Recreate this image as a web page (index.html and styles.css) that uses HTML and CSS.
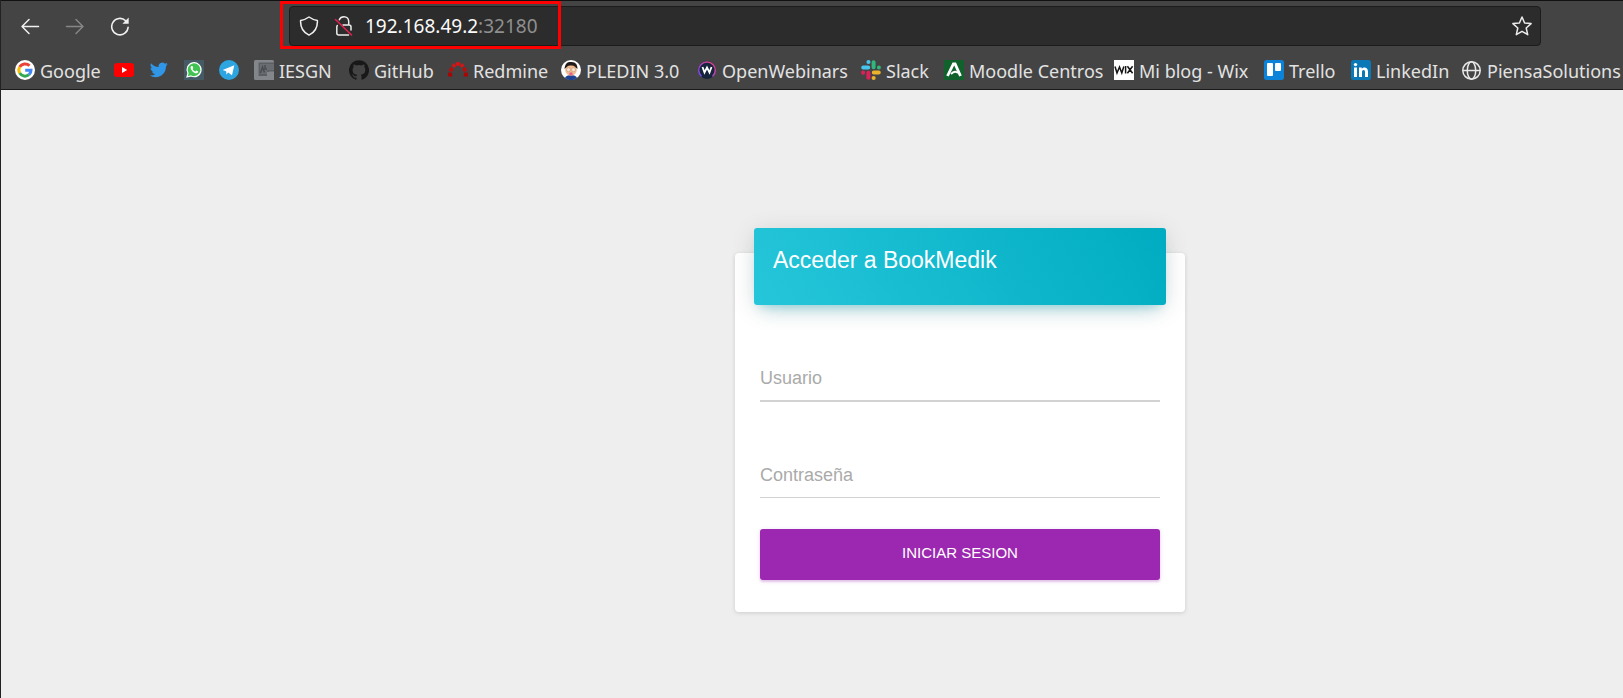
FILE: index.html
```html
<!DOCTYPE html>
<html lang="es">
<head>
<meta charset="utf-8">
<title>BookMedik</title>
<link rel="stylesheet" href="styles.css">
</head>
<body>
<div class="window">
  <header class="chrome">
    <div class="toolbar">
      <div class="nav">
        <button class="nav-button" type="button" aria-label="Atrás"><svg class="icon" viewBox="0 0 20 20"><path d="M18.500 10.500H2M9 3.500l-7 7 7 7" fill="none" stroke="#f0f0f0" stroke-width="1.500" stroke-linecap="round" stroke-linejoin="round"/></svg></button>
        <button class="nav-button" type="button" aria-label="Adelante" disabled><svg class="icon" viewBox="0 0 20 20"><path d="M1.500 10.500H18M11 3.500l7 7-7 7" fill="none" stroke="#868686" stroke-width="1.500" stroke-linecap="round" stroke-linejoin="round"/></svg></button>
        <button class="nav-button" type="button" aria-label="Recargar"><svg class="icon" viewBox="0 0 20 20"><path d="M18.100 11.200A8.200 8.200 0 1 1 15.700 4.800" fill="none" stroke="#f0f0f0" stroke-width="1.600" stroke-linecap="round"/><path d="M18.700 1.500v6.300h-6.300z" fill="#f0f0f0"/></svg></button>
      </div>
      <div class="address">
        <svg class="icon" viewBox="0 0 20 20"><path d="M10 1C7.500 2.800 4.500 4 1.600 4.600 1.300 11 4.500 16.500 10 19.200 15.500 16.500 18.700 11 18.400 4.600 15.500 4 12.500 2.800 10 1z" fill="none" stroke="#f0f0f0" stroke-width="1.500" stroke-linejoin="round"/></svg>
        <svg class="icon icon-lock" viewBox="0 0 20 20"><g fill="none" stroke="#ececec" stroke-width="1.500" stroke-linecap="round"><path d="M5.300 3.800C6 2 7.800.8 10 .8c2.800 0 4.700 2 4.700 4.600V9M9 9h6c1.200 0 2 .8 2 2v3M3.300 9.500c-.3.400-.5.800-.5 1.500v6c0 1.200.8 2 2 2h9.700"/></g><path d="M1.500 3.500l16 15.500" stroke="#e9204f" stroke-width="1.500" stroke-linecap="round"/></svg>
        <span class="url">192.168.49.2<span class="url-port">:32180</span></span>
        <svg class="icon icon-star" viewBox="0 0 20 20"><path d="M10 1l2.600 6 6.500.6-4.900 4.400 1.500 6.700L10 15.300l-5.700 3.400L5.800 12 .9 7.600l6.500-.6z" fill="none" stroke="#ececec" stroke-width="1.500" stroke-linejoin="round"/></svg>
        <span class="highlight"></span>
      </div>
    </div>
    <nav class="bookmarks">
      <a class="bookmark" href="#"><svg class="icon" viewBox="0 0 20 20"><circle cx="10" cy="10" r="10" fill="#fff"/><g fill="none" stroke-width="3"><path d="M14.500 5.800A6.200 6.200 0 0 0 4.700 6.900" stroke="#ea4335"/><path d="M4.700 6.900a6.200 6.200 0 0 0 0 6.200" stroke="#fbbc05"/><path d="M4.700 13.100a6.200 6.200 0 0 0 9.300 1.600" stroke="#34a853"/><path d="M14 14.700A6 6 0 0 0 16 10.200H10.200" stroke="#4285f4"/></g></svg>Google</a>
      <a class="bookmark" href="#" aria-label="YouTube"><svg class="icon" viewBox="0 0 20 20"><rect y="3" width="20" height="14" rx="3" fill="#f00"/><path d="M8 7l5.200 3L8 13z" fill="#fff"/></svg></a>
      <a class="bookmark" href="#" aria-label="Twitter"><svg class="icon" viewBox="0 0 24 24"><path transform="translate(1 1) scale(.9)" d="M23.950 4.570a10 10 0 0 1-2.820.770 4.960 4.960 0 0 0 2.160-2.720c-.95.550-2 .950-3.130 1.180a4.920 4.920 0 0 0-8.380 4.480C7.690 8.100 4.070 6.130 1.640 3.160a4.820 4.820 0 0 0-.67 2.480c0 1.710.87 3.210 2.190 4.100a4.900 4.900 0 0 1-2.230-.62v.06a4.920 4.920 0 0 0 3.950 4.830 5 5 0 0 1-2.210.08 4.940 4.940 0 0 0 4.600 3.420A9.870 9.870 0 0 1 0 19.540a14 14 0 0 0 7.550 2.210c9.050 0 14-7.500 14-13.980 0-.21 0-.42-.02-.63a9.940 9.940 0 0 0 2.460-2.550z" fill="#2f96e8"/></svg></a>
      <a class="bookmark" href="#" aria-label="WhatsApp"><svg class="icon" viewBox="0 0 20 20"><path d="M0 0h20v20H0z" fill="#455a64"/><path d="M3 17l1-3.800A7 7 0 1 1 7 16z" fill="#40c351" stroke="#fff" stroke-width="1.200"/><path d="M7.400 6c-1.300.9-1 2.600.4 4.400 1.600 2.200 4.300 3.700 5.900 2.400.7-.7.500-1.200.2-1.500l-1.500-.7-1 1C10 11.100 9 10 8.600 9l.7-1-.8-2z" fill="#fff"/></svg></a>
      <a class="bookmark" href="#" aria-label="Telegram"><svg class="icon" viewBox="0 0 20 20"><circle cx="10" cy="10" r="10" fill="#2ca5e0"/><path d="M3.700 10L15.300 5.300 13 15.200 9.200 12.600 7.300 14.500 7 11.300z" fill="#fff"/><path d="M7 11.300l1.300 1-1 2.200z" fill="#b5d6e8"/></svg></a>
      <a class="bookmark" href="#"><svg class="icon" viewBox="0 0 20 20"><rect width="20" height="20" rx="1.500" fill="#83868b"/><path d="M20 3.500H5.500V15H14v-4.500h6" fill="none" stroke="#5c5f62" stroke-width="1.800"/><path d="M6.400 4.400H20V9.600H13V14H6.400z" fill="#696c70"/><path d="M6.500 13l2-6 2 5.500M11 5v4h2" fill="none" stroke="#4a4d50" stroke-width="1.500"/><path d="M13 12h7v8h-7z" fill="#83868b"/></svg>IESGN</a>
      <a class="bookmark" href="#"><svg class="icon" viewBox="0 0 24 24"><path d="M12 .3a12 12 0 0 0-3.800 23.400c.6.100.8-.3.800-.6v-2c-3.300.7-4-1.600-4-1.600-.6-1.400-1.400-1.800-1.400-1.800-1-.7.100-.7.100-.7 1.200 0 1.900 1.200 1.900 1.200 1 1.800 2.800 1.300 3.500 1 0-.8.400-1.300.7-1.600-2.700-.3-5.500-1.300-5.500-6 0-1.200.5-2.300 1.300-3.100-.2-.4-.6-1.600 0-3.200 0 0 1-.3 3.400 1.200a11.500 11.500 0 0 1 6 0c2.300-1.500 3.300-1.200 3.300-1.200.6 1.600.2 2.800 0 3.200.9.800 1.300 1.900 1.300 3.200 0 4.600-2.800 5.600-5.500 5.900.5.400.9 1 .9 2.200v3.300c0 .3.100.7.800.6A12 12 0 0 0 12 .3" fill="#181818"/></svg>GitHub</a>
      <a class="bookmark" href="#"><svg class="icon" viewBox="0 0 20 20"><path d="M0 12.500l4 .3.300 3.700H0zM16 12.800l4-.3v4h-4.300z" fill="#a80505"/><path d="M2.300 7l3.500 1.800-1.500 3.200L.8 10.800zM17.700 7l-3.500 1.800 1.500 3.200 3.500-1.200z" fill="#bd0c0c"/><path d="M3.500 5.200L6.200 3l2 3-2 2zM16.500 5.200L13.800 3l-2 3 2 2zM7.800 2.200h4.400l-.5 3.600H8.300z" fill="#d91414"/></svg>Redmine</a>
      <a class="bookmark" href="#"><svg class="icon" viewBox="0 0 20 20"><circle cx="10" cy="10" r="10" fill="#fff"/><path d="M4 18c1-4 11-4 12 0a10 10 0 0 1-12 0z" fill="#1d4392"/><circle cx="10" cy="10" r="5.800" fill="#f2bd91"/><path d="M3.500 9C4 3 7 1.500 10.500 2 15 2 16.500 5 16.500 9 14 7 13 5 10 5.500 7 5 6 7 3.500 9z" fill="#221a18"/><circle cx="7.500" cy="9.700" r="2" fill="#f8e4d3" stroke="#b68a69" stroke-width=".5"/><circle cx="12.500" cy="9.700" r="2" fill="#f8e4d3" stroke="#b68a69" stroke-width=".5"/><circle cx="10" cy="14" r="1.800" fill="#e8638b"/></svg>PLEDIN 3.0</a>
      <a class="bookmark" href="#"><svg class="icon" viewBox="0 0 20 20"><defs><linearGradient id="ring" x1="0" y1="1" x2="1" y2="0"><stop stop-color="#6b4df0"/><stop offset="1" stop-color="#f0407e"/></linearGradient></defs><circle cx="10" cy="10" r="9" fill="#15233c"/><path d="M4.500 16.500a8.300 8.300 0 1 1 11 0" fill="none" stroke="url(#ring)" stroke-width="1.500"/><path d="M5.500 7l2 5.500L10 7.500l2.500 5L14.500 7" fill="none" stroke="#fff" stroke-width="1.800"/></svg>OpenWebinars</a>
      <a class="bookmark" href="#"><svg class="icon" viewBox="0 0 20 20"><g fill="none" stroke-width="4" stroke-linecap="round"><path d="M2.200 7.400h5M7.400 2.100h.1" stroke="#48c5ee"/><path d="M12.600 2.200v5M17.900 7.400v.1" stroke="#31b67c"/><path d="M12.800 12.600h5M12.600 17.900h.1" stroke="#ebb22e"/><path d="M7.400 12.800v5M2.100 12.600v.1" stroke="#df1f5a"/></g></svg>Slack</a>
      <a class="bookmark" href="#"><svg class="icon" viewBox="0 0 20 20"><path d="M0 0h20v20H0z" fill="#11612d"/><path d="M3.500 16L9.400 4h1.700L16.500 16" fill="none" stroke="#fff" stroke-width="2.800"/><path d="M7 14q4-4 7-1" fill="none" stroke="#fff" stroke-width="1.800"/></svg>Moodle Centros</a>
      <a class="bookmark" href="#"><svg class="icon" viewBox="0 0 20 20"><path d="M0 0h20v20H0z" fill="#fff"/><path d="M1 6.500l2 6.500 2.500-6 2.300 6 2-6.500M11.600 6v7.500M13.400 6.300l5.200 7M18.600 6.300l-5.200 7" fill="none" stroke="#151515" stroke-width="1.500"/></svg>Mi blog - Wix</a>
      <a class="bookmark" href="#"><svg class="icon" viewBox="0 0 20 20"><rect width="20" height="20" rx="2.500" fill="#0b83d8"/><rect x="3" y="3" width="6" height="13" rx="1" fill="#fff"/><rect x="11" y="3" width="6" height="8" rx="1" fill="#fff"/></svg>Trello</a>
      <a class="bookmark" href="#"><svg class="icon" viewBox="0 0 20 20"><rect width="20" height="20" rx="2.500" fill="#0a78b7"/><path d="M3 7.600h3V17H3zM8 7.600h2.800v1.300c1.700-2.500 6.200-1.900 6.200 2.500V17h-3v-5c0-2.700-3-2.500-3 0v5H8z" fill="#fff"/><circle cx="4.500" cy="4.600" r="1.700" fill="#fff"/></svg>LinkedIn</a>
      <a class="bookmark" href="#"><svg class="icon" viewBox="0 0 20 20"><g fill="none" stroke="#e8e8e8" stroke-width="1.500"><circle cx="9.500" cy="10.500" r="8.700"/><ellipse cx="9.500" cy="10.500" rx="4.200" ry="8.700"/><path d="M.8 10.500h17.400"/></g></svg>PiensaSolutions</a>
    </nav>
  </header>
  <main class="page">
    <form class="card">
      <h1 class="card-header">Acceder a BookMedik</h1>
      <input class="field field-user" type="text" placeholder="Usuario" aria-label="Usuario">
      <input class="field" type="password" placeholder="Contraseña" aria-label="Contraseña">
      <button class="submit" type="button">INICIAR SESION</button>
    </form>
  </main>
</div>
</body>
</html>
```
FILE: styles.css
```css
* { box-sizing: border-box; }

body {
  margin: 0;
  background: #eee;
  font-family: "Liberation Sans", Arial, sans-serif;
}

.window {
  min-height: 100vh;
  border-left: 1px solid #222;
  overflow: hidden;
}

.chrome {
  background: #444;
  border-top: 1px solid #111;
  border-bottom: 1px solid #1b1b1b;
  color: #e2e2e2;
  font-family: "Noto Sans", sans-serif;
}

.toolbar {
  display: flex;
  align-items: center;
  padding: 5px 82px 5px 19px;
}

.nav {
  display: flex;
  gap: 25px;
  margin-right: 159px;
}

.nav-button {
  display: flex;
  padding: 0;
  border: 0;
  background: none;
}

.icon {
  flex: none;
  width: 20px;
  height: 20px;
}

.address {
  position: relative;
  flex: 1;
  display: flex;
  align-items: center;
  height: 40px;
  padding: 0 8px 0 9px;
  border: 1px solid #1c1c1c;
  border-radius: 4px;
  background: #2c2c2c;
}

.icon-lock { margin: 0 11px 0 15px; }
.icon-star { margin-left: auto; }

.url {
  color: #fafafa;
  font-size: 19px;
  line-height: 24px;
}

.url-port { color: #8f8f8f; }

.highlight {
  position: absolute;
  top: -6px;
  left: -10px;
  width: 281px;
  height: 48px;
  border: 3px solid #f00;
}

.bookmarks {
  display: grid;
  grid-template-columns: 84px repeat(4, 20px) 80px 84px 98px 121px 149px 68px 155px 135px 72px 96px auto;
  gap: 15px;
  padding: 5px 0 3px 14px;
}

.bookmark {
  display: flex;
  align-items: flex-start;
  gap: 5px;
  color: inherit;
  font-size: 18px;
  line-height: 30px;
  text-decoration: none;
  white-space: nowrap;
}

.bookmark .icon { margin-top: 4px; }

.page {
  display: grid;
  grid-template-columns: 734fr 450px 438fr;
  padding: 163px 0 80px;
}

.card {
  grid-column: 2;
  display: flex;
  flex-direction: column;
  padding: 0 25px 32px;
  border-radius: 4px;
  background: #fff;
  box-shadow: 0 1px 4px rgba(0, 0, 0, 0.14);
}

.card-header {
  margin: -25px -6px 47px;
  padding: 19px;
  height: 77px;
  border-radius: 3px;
  background: linear-gradient(60deg, #26c6da, #00acc1);
  box-shadow: 0 12px 20px -10px rgba(0, 172, 193, 0.28), 0 4px 25px rgba(0, 0, 0, 0.12), 0 7px 8px -5px rgba(0, 172, 193, 0.2);
  color: #fff;
  font-size: 23px;
  font-weight: 400;
  line-height: 26px;
}

.field {
  height: 48px;
  margin: 0 0 31px;
  padding: 4px 0 0;
  border: 0;
  border-bottom: 1px solid #d2d2d2;
  background: none;
  font-family: inherit;
  font-size: 18px;
}

.field-user {
  height: 50px;
  margin-bottom: 48px;
  border-bottom-width: 2px;
}

.field::placeholder { color: #aaa; opacity: 1; }

.submit {
  height: 51px;
  padding: 0 0 4px;
  border: 0;
  border-radius: 3px;
  background: #9c27b0;
  box-shadow: 0 2px 2px rgba(156, 39, 176, 0.2), 0 1px 5px rgba(156, 39, 176, 0.15);
  color: #fff;
  font-family: inherit;
  font-size: 15px;
}
```
